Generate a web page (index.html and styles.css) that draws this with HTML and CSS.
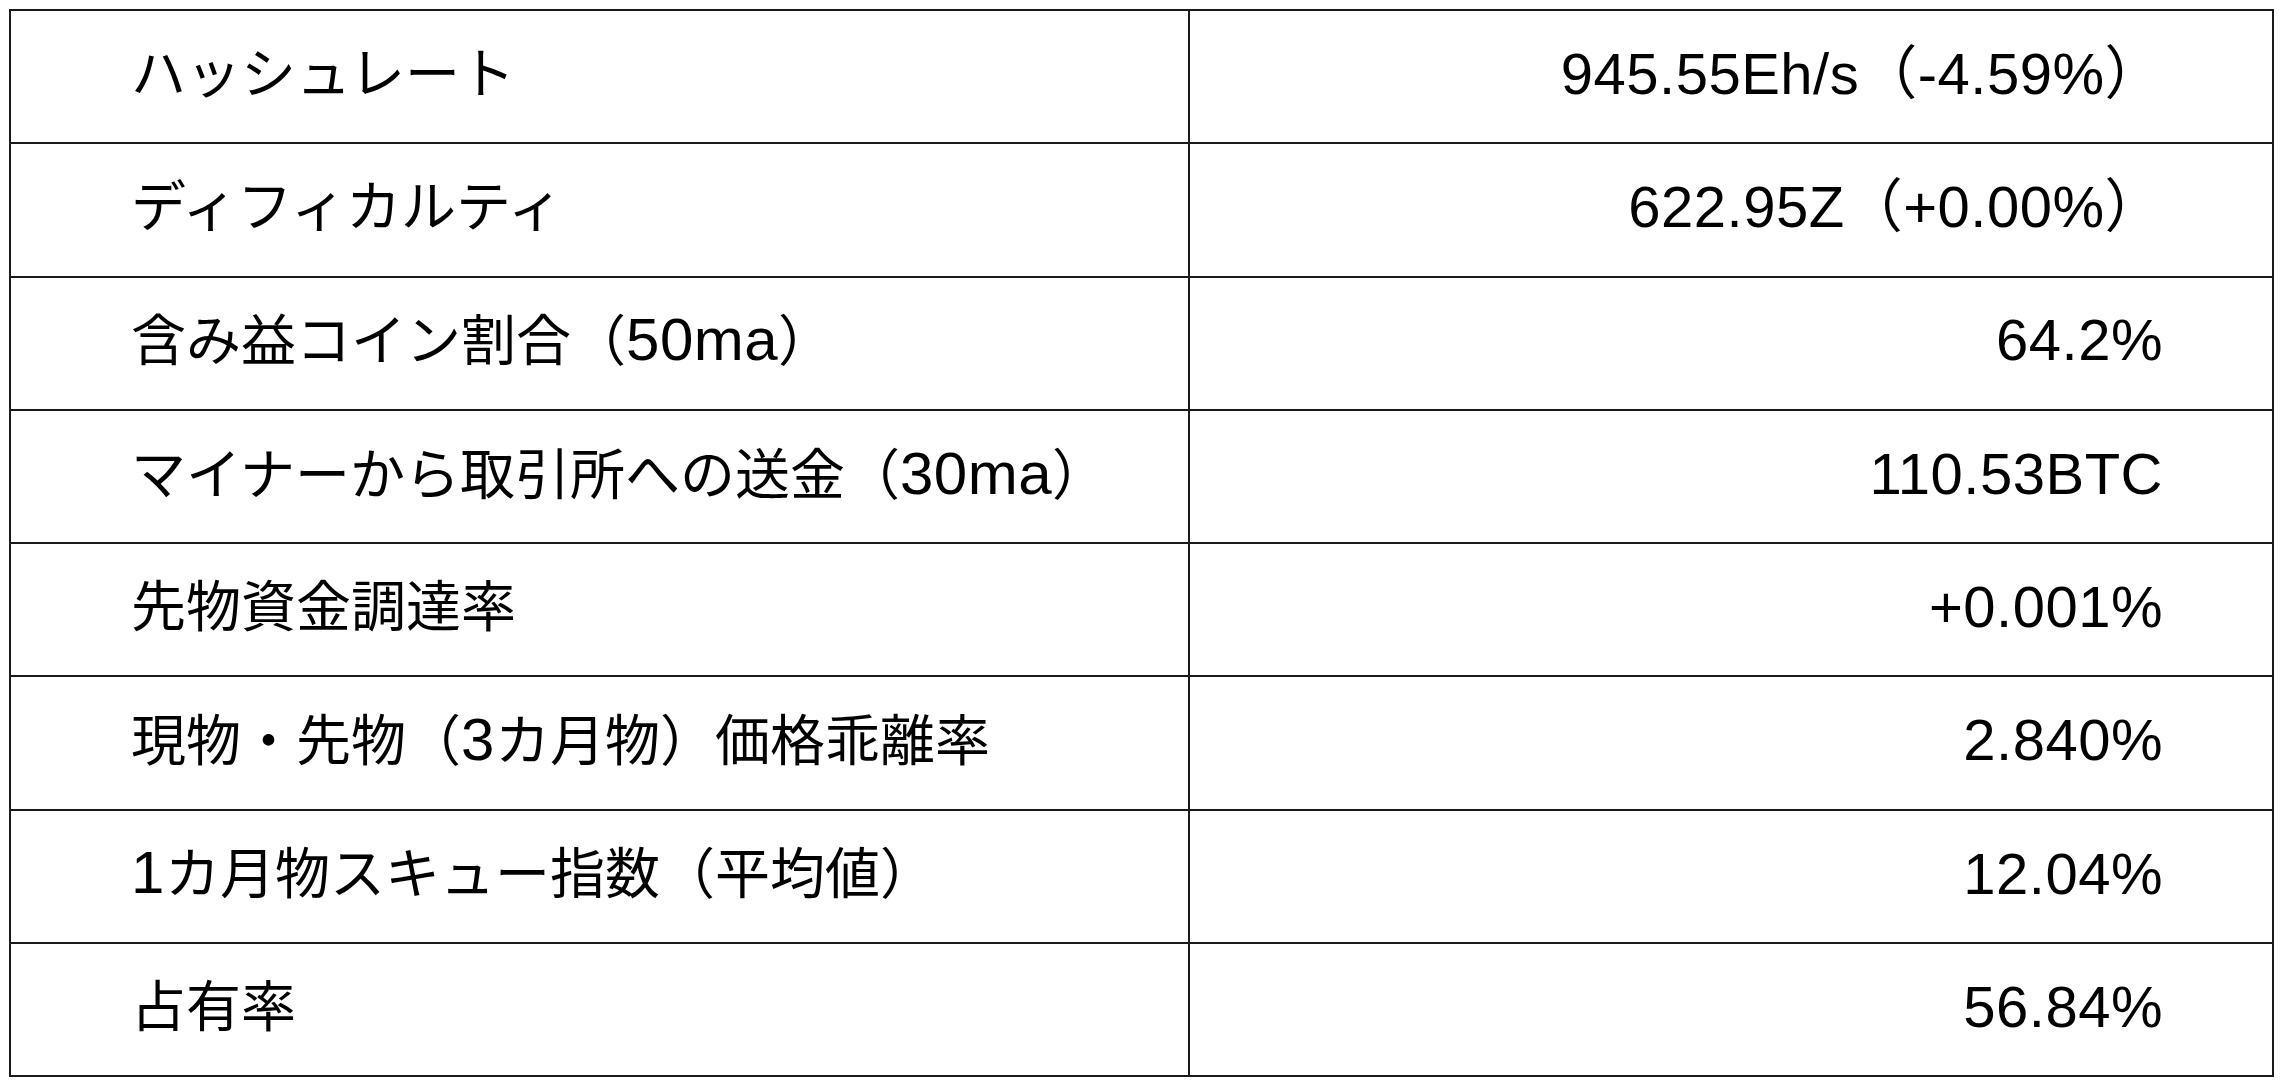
FILE: index.html
```html
<!DOCTYPE html>
<html lang="ja">
<head>
<meta charset="utf-8">
<title>指標</title>
<link rel="stylesheet" href="styles.css">
</head>
<body>
<table class="stats">
  <tbody>
    <tr><td class="label">ハッシュレート</td><td class="value">945.55Eh/s（-4.59%）</td></tr>
    <tr><td class="label">ディフィカルティ</td><td class="value">622.95Z（+0.00%）</td></tr>
    <tr><td class="label">含み益コイン割合（<span class="lat">50ma</span>）</td><td class="value">64.2%</td></tr>
    <tr><td class="label">マイナーから取引所への送金（<span class="lat">30ma</span>）</td><td class="value">110.53BTC</td></tr>
    <tr><td class="label">先物資金調達率</td><td class="value">+0.001%</td></tr>
    <tr><td class="label">現物・先物（<span class="lat">3</span>カ月物）価格乖離率</td><td class="value">2.840%</td></tr>
    <tr><td class="label"><span class="lat">1</span>カ月物スキュー指数（平均値）</td><td class="value">12.04%</td></tr>
    <tr><td class="label">占有率</td><td class="value">56.84%</td></tr>
  </tbody>
</table>
</body>
</html>
```

FILE: styles.css
```css
html, body {
  margin: 0;
  padding: 0;
  background: #ffffff;
}

body {
  padding: 9px 0 0 9px;
  font-family: "Liberation Sans", "Noto Sans CJK JP", sans-serif;
  color: #000000;
}

.stats {
  border-collapse: collapse;
  width: 2265px;
  table-layout: fixed;
}

.stats tr {
  height: 133.3px;
}

.stats td {
  border: 2px solid #1a1a1a;
  vertical-align: middle;
  line-height: 1.2;
  padding-top: 0;
  padding-bottom: 6px;
  white-space: nowrap;
}

.label {
  width: 1057px;
  font-size: 55px;
  padding-left: 120px;
  padding-right: 0;
  text-align: left;
}

.lat {
  font-size: 60px;
  letter-spacing: 0.5px;
}

.value {
  font-size: 58px;
  letter-spacing: 0.5px;
  text-align: right;
  padding-left: 0;
  padding-right: 109px;
}
```
